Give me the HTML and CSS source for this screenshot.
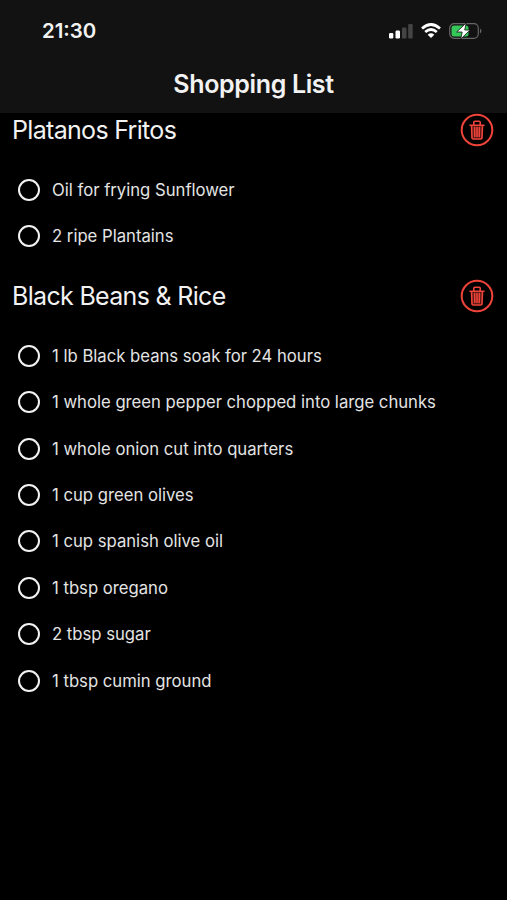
FILE: index.html
```html
<!DOCTYPE html>
<html lang="en">
<head>
<meta charset="utf-8">
<title>Shopping List</title>
<link rel="stylesheet" href="styles.css">
</head>
<body>
<svg width="0" height="0" class="defs">
  <symbol id="trash" viewBox="0 0 34 34">
    <circle cx="17" cy="17" r="15.3" fill="none" stroke="currentColor" stroke-width="2"/>
    <path d="M11.2 12.5H22.8L22.2 25.8H11.8Z" fill="currentColor" fill-opacity=".35"/>
    <path d="M10 12.2H24M13.8 12V9.2Q13.8 8.2 14.8 8.2H19.2Q20.2 8.2 20.2 9.2V12M11.5 12.5L12 25Q12 26 13.2 26H20.8Q22 26 22 25L22.5 12.5M14.6 14.5L14.8 23.5M17 14.5V23.5M19.4 14.5L19.2 23.5" fill="none" stroke="currentColor" stroke-width="1.6" stroke-linecap="round"/>
  </symbol>
</svg>
<header class="header">
  <div class="status">
    <span class="time">21:30</span>
    <div class="indicators">
      <svg width="24" height="16" viewBox="0 0 24 16"><g fill="#fff"><rect x="0" y="10" width="4.3" height="5.5" rx="1.2"/><rect x="6.5" y="7.5" width="4.5" height="8" rx="1.2"/></g><g fill="#444"><rect x="13" y="4.5" width="4.5" height="11" rx="1.2"/><rect x="19.2" y="1" width="4.5" height="14.5" rx="1.2"/></g></svg>
      <svg class="wifi" width="20" height="16" viewBox="0 0 20 16"><path d="M1 5.5Q10-2.5 19 5.5M4.2 9Q10 4 15.8 9" fill="none" stroke="#fff" stroke-width="2.7"/><path d="M6.7 11.7Q10 9 13.3 11.7L10 15Z" fill="#fff"/></svg>
      <svg class="battery" width="34" height="18" viewBox="0 0 34 18"><rect x=".7" y="1.7" width="28.6" height="14.6" rx="4.5" fill="none" stroke="#666" stroke-width="1.2"/><rect x="2.5" y="3.5" width="17" height="11" rx="2.5" fill="#35c759"/><path d="M31 6.5Q34 9 31 11.5Z" fill="#666"/><path d="M17.2 1L7.7 10H13.2L11.7 17L21.2 8H15.7Z" fill="#fff" stroke="#111" stroke-width=".8"/></svg>
    </div>
  </div>
  <h1 class="title">Shopping List</h1>
</header>
<main>
  <section class="recipe">
    <div class="heading"><h2>Platanos Fritos</h2><button class="delete" aria-label="Delete"><svg><use href="#trash"/></svg></button></div>
    <ul>
      <li><i></i><span>Oil for frying Sunflower</span></li>
      <li><i></i><span>2 ripe Plantains</span></li>
    </ul>
  </section>
  <section class="recipe">
    <div class="heading"><h2>Black Beans &amp; Rice</h2><button class="delete" aria-label="Delete"><svg><use href="#trash"/></svg></button></div>
    <ul>
      <li><i></i><span>1 lb Black beans soak for 24 hours</span></li>
      <li><i></i><span>1 whole green pepper chopped into large chunks</span></li>
      <li><i></i><span>1 whole onion cut into quarters</span></li>
      <li><i></i><span>1 cup green olives</span></li>
      <li><i></i><span>1 cup spanish olive oil</span></li>
      <li><i></i><span>1 tbsp oregano</span></li>
      <li><i></i><span>2 tbsp sugar</span></li>
      <li><i></i><span>1 tbsp cumin ground</span></li>
    </ul>
  </section>
</main>
</body>
</html>
```
FILE: styles.css
```css
* { box-sizing: border-box; margin: 0; padding: 0; }
body { background: #000; color: #f2f2f2; font-family: Inter, sans-serif; min-height: 900px; }
.defs { display: block; }
.header { height: 113px; background: #121212; }
.status { height: 62px; display: flex; justify-content: space-between; align-items: center; padding: 0 24px 0 42px; }
.time { font-size: 20.4px; line-height: 24px; font-weight: 600; }
.indicators { display: flex; align-items: center; }
.wifi { margin-left: 8px; }
.battery { margin-left: 8px; }
.title { font-size: 25px; line-height: 44px; font-weight: 600; text-align: center; letter-spacing: -.35px; }
.recipe { height: 166px; }
.heading { height: 34px; display: flex; align-items: center; justify-content: space-between; padding: 0 13px 0 12px; }
h2 { font-size: 25px; font-weight: 400; letter-spacing: -.68px; }
.delete { width: 34px; height: 34px; border: 0; background: none; color: #f0443a; }
.delete svg { display: block; width: 34px; height: 34px; }
ul { list-style: none; padding-top: 19.6px; }
li { height: 46.43px; display: flex; align-items: center; padding-left: 18px; font-size: 16.7px; letter-spacing: -.01px; color: #e4e4e4; }
li i { width: 22px; height: 22px; border: 2px solid #f2f2f2; border-radius: 50%; margin-right: 12px; }
```
